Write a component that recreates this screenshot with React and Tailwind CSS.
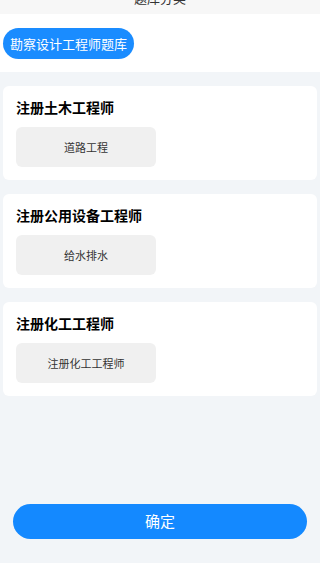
const groups = [
  { title: '注册土木工程师', items: ['道路工程'] },
  { title: '注册公用设备工程师', items: ['给水排水'] },
  { title: '注册化工工程师', items: ['注册化工工程师'] },
]

export default function App() {
  return (
    <div
      className="relative w-[320px] h-[563px] bg-[#f2f5f8] overflow-hidden"
      style={{ fontFamily: '"Noto Sans CJK SC", "Noto Sans", sans-serif' }}
    >
      {/* header */}
      <div className="h-[14px] bg-[#f7f7f7] overflow-hidden flex justify-center">
        <div className="-mt-[10px] text-[13px] leading-[16px] text-[#333]">题库分类</div>
      </div>

      {/* bank tabs */}
      <div className="bg-white h-[58px] pt-[14px] px-[3px]">
        <button className="h-[31px] px-[7px] rounded-full bg-[#1a8cff] text-white text-[13px] leading-[31px]">
          勘察设计工程师题库
        </button>
      </div>

      {/* groups */}
      <div className="pt-[14px] px-[3px] flex flex-col gap-[14px]">
        {groups.map((g) => (
          <div key={g.title} className="bg-white rounded-[6px] h-[94px] px-[13px] pt-[11px]">
            <div className="text-[14px] leading-[20px] font-bold text-black">{g.title}</div>
            <div className="mt-[10px] flex gap-2">
              {g.items.map((it) => (
                <div
                  key={it}
                  className="w-[140px] h-[40px] rounded-[6px] bg-[#f0f0f0] flex items-center justify-center text-[11px] text-[#333]"
                >
                  {it}
                </div>
              ))}
            </div>
          </div>
        ))}
      </div>

      {/* confirm */}
      <button className="absolute left-[13px] top-[504px] w-[294px] h-[35px] rounded-full bg-[#1489ff] text-white text-[15px]">
        确定
      </button>
    </div>
  )
}
